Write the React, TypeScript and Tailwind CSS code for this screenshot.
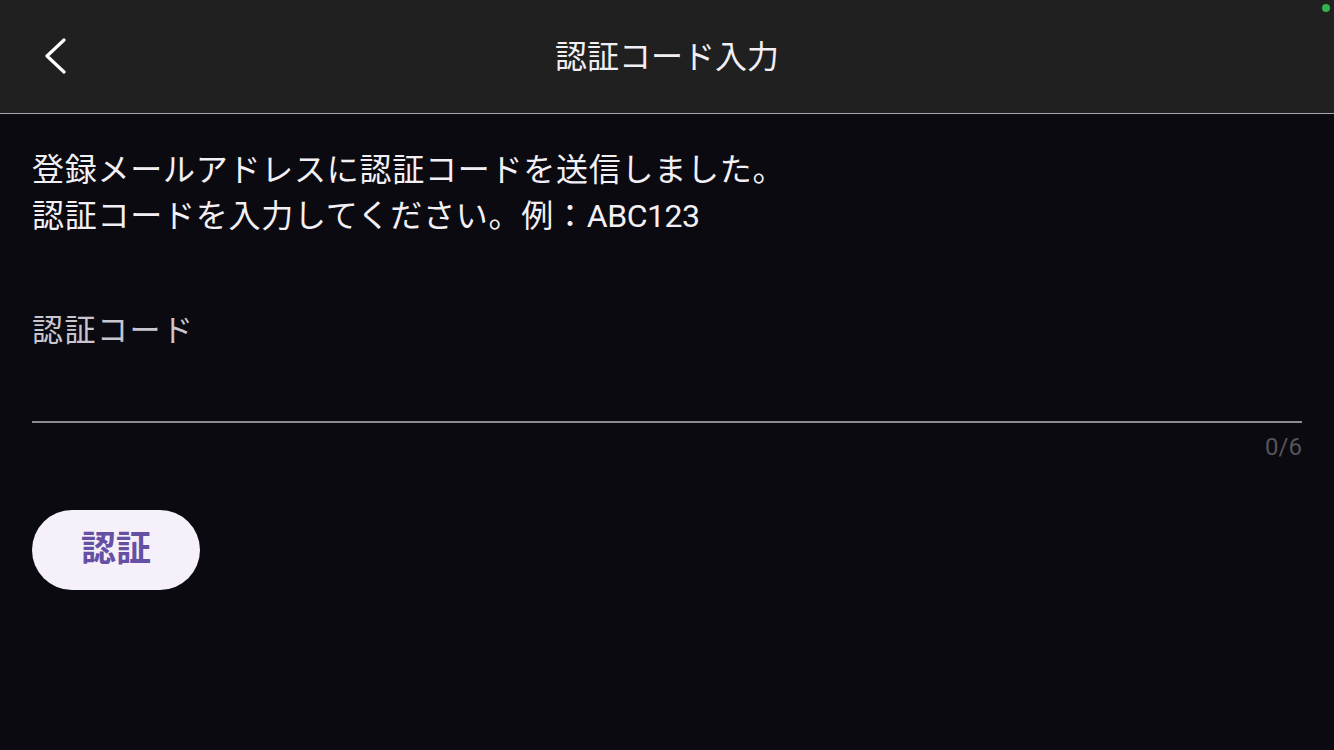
const font = {
  fontFamily: 'Roboto, "Noto Sans CJK JP", "Noto Sans", sans-serif',
};

function BackIcon() {
  return (
    <svg width="24" height="36" viewBox="0 0 24 36" fill="none" aria-hidden="true">
      <polyline
        points="20,2 3,18 20,34"
        stroke="#ffffff"
        strokeWidth="3.2"
        strokeLinecap="round"
        strokeLinejoin="round"
      />
    </svg>
  );
}

export default function App() {
  return (
    <div
      className="flex h-[750px] w-[1334px] flex-col overflow-hidden bg-[#0b0a10] text-white"
      style={font}
    >
      {/* top bar */}
      <header className="relative flex h-[114px] shrink-0 items-center justify-center border-b border-[#a9a6ad] bg-[#202020]">
        <button className="absolute left-[44px] top-[38px] flex h-[36px] w-[24px] items-center justify-center">
          <BackIcon />
        </button>
        <h1 className="text-[32px] leading-none text-[#f1eff4]">認証コード入力</h1>
        <span className="absolute right-[4px] top-[4px] h-[8px] w-[8px] rounded-full bg-[#2fb34a]" />
      </header>

      <main className="flex flex-col px-[32px]">
        <p className="mt-[33px] text-[32px] leading-[46px] tracking-[0.75px] text-[#f2f0f5]">
          登録メールアドレスに認証コードを送信しました。
          <br />
          認証コードを入力してください。例：<span className="tracking-[-0.5px]">ABC123</span>
        </p>

        {/* input */}
        <div className="mt-[72px] flex flex-col">
          <label className="text-[31px] leading-[40px] tracking-[1.5px] text-[#cac6cf]">認証コード</label>
          <div className="mt-[70px] h-[2px] w-full bg-[#8e8a93]" />
          <span className="mt-[9px] self-end text-[24px] leading-[30px] text-[#56545b]">0/6</span>
        </div>

        <button className="mt-[48px] flex h-[80px] w-[168px] items-center justify-center rounded-full bg-[#f5f0fa] text-[35px] font-bold text-[#6650a4]">
          認証
        </button>
      </main>
    </div>
  );
}
